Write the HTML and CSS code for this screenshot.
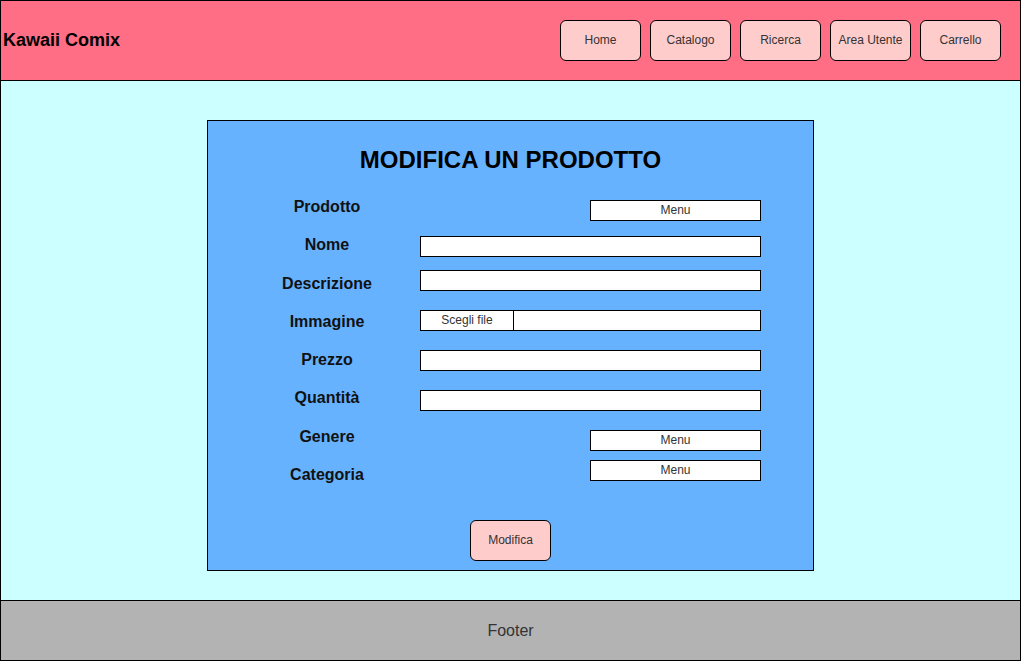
FILE: index.html
```html
<!DOCTYPE html>
<html lang="it">
<head>
    <meta charset="UTF-8">
    <meta name="viewport" content="width=device-width, initial-scale=1.0">
    <title>Kawaii Comix - Modifica prodotto</title>
    <link rel="stylesheet" href="styles.css">
</head>
<body>
    <div class="page">
        <header class="site-header">
            <div class="brand">Kawaii Comix</div>
            <nav class="nav">
                <a class="nav-button" href="#">Home</a>
                <a class="nav-button" href="#">Catalogo</a>
                <a class="nav-button" href="#">Ricerca</a>
                <a class="nav-button" href="#">Area Utente</a>
                <a class="nav-button" href="#">Carrello</a>
            </nav>
        </header>

        <main class="content">
            <form class="edit-box" onsubmit="return false">
                <h1 class="edit-title">MODIFICA UN PRODOTTO</h1>

                <div class="edit-body">
                    <!-- labels column -->
                    <div class="labels">
                        <label class="field-label">Prodotto</label>
                        <label class="field-label">Nome</label>
                        <label class="field-label">Descrizione</label>
                        <label class="field-label">Immagine</label>
                        <label class="field-label">Prezzo</label>
                        <label class="field-label">Quantità</label>
                        <label class="field-label">Genere</label>
                        <label class="field-label">Categoria</label>
                    </div>

                    <!-- fields column -->
                    <div class="fields">
                        <div class="menu">Menu</div>
                        <input class="text-input gap-15" type="text">
                        <input class="text-input gap-13" type="text">
                        <div class="file-input gap-19">
                            <span class="file-button">Scegli file</span>
                        </div>
                        <input class="text-input gap-19" type="text">
                        <input class="text-input gap-19" type="text">
                        <div class="menu gap-19">Menu</div>
                        <div class="menu gap-9">Menu</div>
                    </div>
                </div>

                <button class="submit-button" type="submit">Modifica</button>
            </form>
        </main>

        <footer class="site-footer">Footer</footer>
    </div>
</body>
</html>
```

FILE: styles.css
```css
/* Base */
body {
    margin: 0;
    font-family: "Liberation Sans", Arial, Helvetica, sans-serif;
}

.page {
    width: 1021px;
    height: 661px;
    border: 1px solid #000;
    box-sizing: border-box;
    display: flex;
    flex-direction: column;
    background-color: #ccffff;
}

/* Header */
.site-header {
    height: 80px;
    box-sizing: border-box;
    border-bottom: 1px solid #000;
    background-color: #ff6e84;
    display: flex;
    align-items: center;
    justify-content: space-between;
    padding: 0 19px 0 2px;
}

.brand {
    font-size: 18px;
    font-weight: bold;
    color: #000;
}

.nav {
    display: flex;
    gap: 9px;
}

.nav-button {
    width: 81px;
    height: 41px;
    box-sizing: border-box;
    border: 1px solid #000;
    border-radius: 6px;
    padding-bottom: 2px;
    background-color: #ffcccc;
    color: #333;
    font-size: 12px;
    text-decoration: none;
    display: flex;
    align-items: center;
    justify-content: center;
}

/* Main content */
.content {
    flex: 1;
    display: flex;
    justify-content: center;
    align-items: flex-start;
}

.edit-box {
    width: 607px;
    height: 451px;
    box-sizing: border-box;
    margin-top: 39px;
    border: 1px solid #000;
    background-color: #66b2ff;
    display: flex;
    flex-direction: column;
    align-items: center;
}

.edit-title {
    margin: 0;
    padding-top: 25px;
    font-size: 24px;
    line-height: 28px;
    font-weight: bold;
    color: #000;
}

.edit-body {
    align-self: stretch;
    display: flex;
    margin-top: 14px;
    padding-left: 26px;
}

.labels {
    width: 186px;
    display: flex;
    flex-direction: column;
}

.field-label {
    height: 38.25px;
    line-height: 38.25px;
    text-align: center;
    font-size: 16px;
    font-weight: bold;
    color: #111;
}

.fields {
    width: 341px;
    padding-top: 12px;
    display: flex;
    flex-direction: column;
}

/* Field boxes */
.text-input,
.file-input,
.menu {
    height: 21px;
    box-sizing: border-box;
    border: 1px solid #000;
    background-color: #fff;
    margin: 0;
}

.text-input {
    width: 341px;
    padding: 0 4px;
    font-family: inherit;
    font-size: 12px;
    outline: none;
}

.file-input {
    width: 341px;
    display: flex;
}

.file-button {
    width: 93px;
    box-sizing: border-box;
    border-right: 1px solid #000;
    font-size: 12px;
    line-height: 18px;
    text-align: center;
    color: #333;
}

.menu {
    width: 171px;
    align-self: flex-end;
    font-size: 12px;
    line-height: 19px;
    text-align: center;
    color: #333;
}

.gap-9 { margin-top: 9px; }
.gap-13 { margin-top: 13px; }
.gap-15 { margin-top: 15px; }
.gap-19 { margin-top: 19px; }

.submit-button {
    margin-top: 26px;
    width: 81px;
    height: 41px;
    padding-bottom: 2px;
    border: 1px solid #000;
    border-radius: 6px;
    background-color: #ffcccc;
    color: #333;
    font-family: inherit;
    font-size: 12px;
    cursor: pointer;
}

/* Footer */
.site-footer {
    height: 60px;
    box-sizing: border-box;
    border-top: 1px solid #000;
    background-color: #b3b3b3;
    color: #333;
    font-size: 16px;
    display: flex;
    align-items: center;
    justify-content: center;
}
```
